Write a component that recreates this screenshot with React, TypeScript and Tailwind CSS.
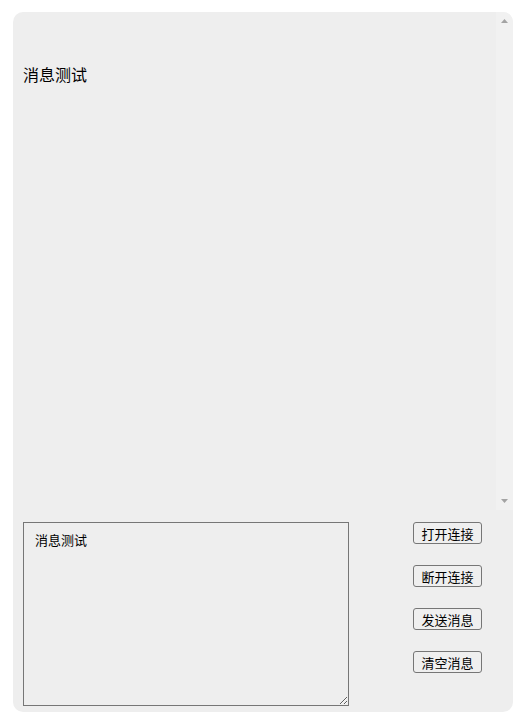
import React, { useState } from 'react';

const App: React.FC = () => {
  const [messages, setMessages] = useState<string[]>(['消息测试']);
  const [draft, setDraft] = useState('消息测试');

  // Action buttons on the right side
  const actions = [
    { name: '打开连接', onClick: () => {} },
    { name: '断开连接', onClick: () => {} },
    { name: '发送消息', onClick: () => setMessages([...messages, draft]) },
    { name: '清空消息', onClick: () => setMessages([]) },
  ];

  return (
    <div className="w-[523px] h-[721px] bg-white pt-[12px] pl-[13px]" style={{ fontFamily: '"Noto Sans CJK SC", "Noto Sans", sans-serif' }}>
      <div className="w-[500px] h-[700px] bg-[#eeeeee] rounded-[10px] flex flex-col overflow-hidden">
        {/* Message list with scrollbar */}
        <div className="h-[498px] flex">
          <div className="flex-1 overflow-y-auto px-[10px] pt-[49px] text-[16px] leading-[26px] text-black">
            {messages.map((m, i) => (
              <p key={i}>{m}</p>
            ))}
          </div>
          <div className="w-[17px] bg-[#f1f1f1] flex flex-col justify-between items-center py-[7px]">
            <svg width="7" height="4" viewBox="0 0 7 4"><path d="M3.5 0L7 4H0z" fill="#a3a3a3" /></svg>
            <svg width="7" height="4" viewBox="0 0 7 4"><path d="M0 0h7L3.5 4z" fill="#a3a3a3" /></svg>
          </div>
        </div>
        {/* Input and buttons */}
        <div className="flex pt-[12px] pl-[10px]">
          <textarea
            value={draft}
            onChange={(e) => setDraft(e.target.value)}
            className="w-[326px] h-[184px] border border-[#767676] bg-[#eeeeee] px-[11px] py-[7px] text-[13px] leading-[20px] text-black resize-y outline-none"
          />
          <div className="flex flex-col gap-[21px] ml-[64px]">
            {actions.map((a) => (
              <button
                key={a.name}
                onClick={a.onClick}
                className="w-[69px] h-[22px] border border-[#767676] rounded-[3px] bg-[#efefef] text-[13px] leading-none text-black"
              >
                {a.name}
              </button>
            ))}
          </div>
        </div>
      </div>
    </div>
  );
};

export default App;
